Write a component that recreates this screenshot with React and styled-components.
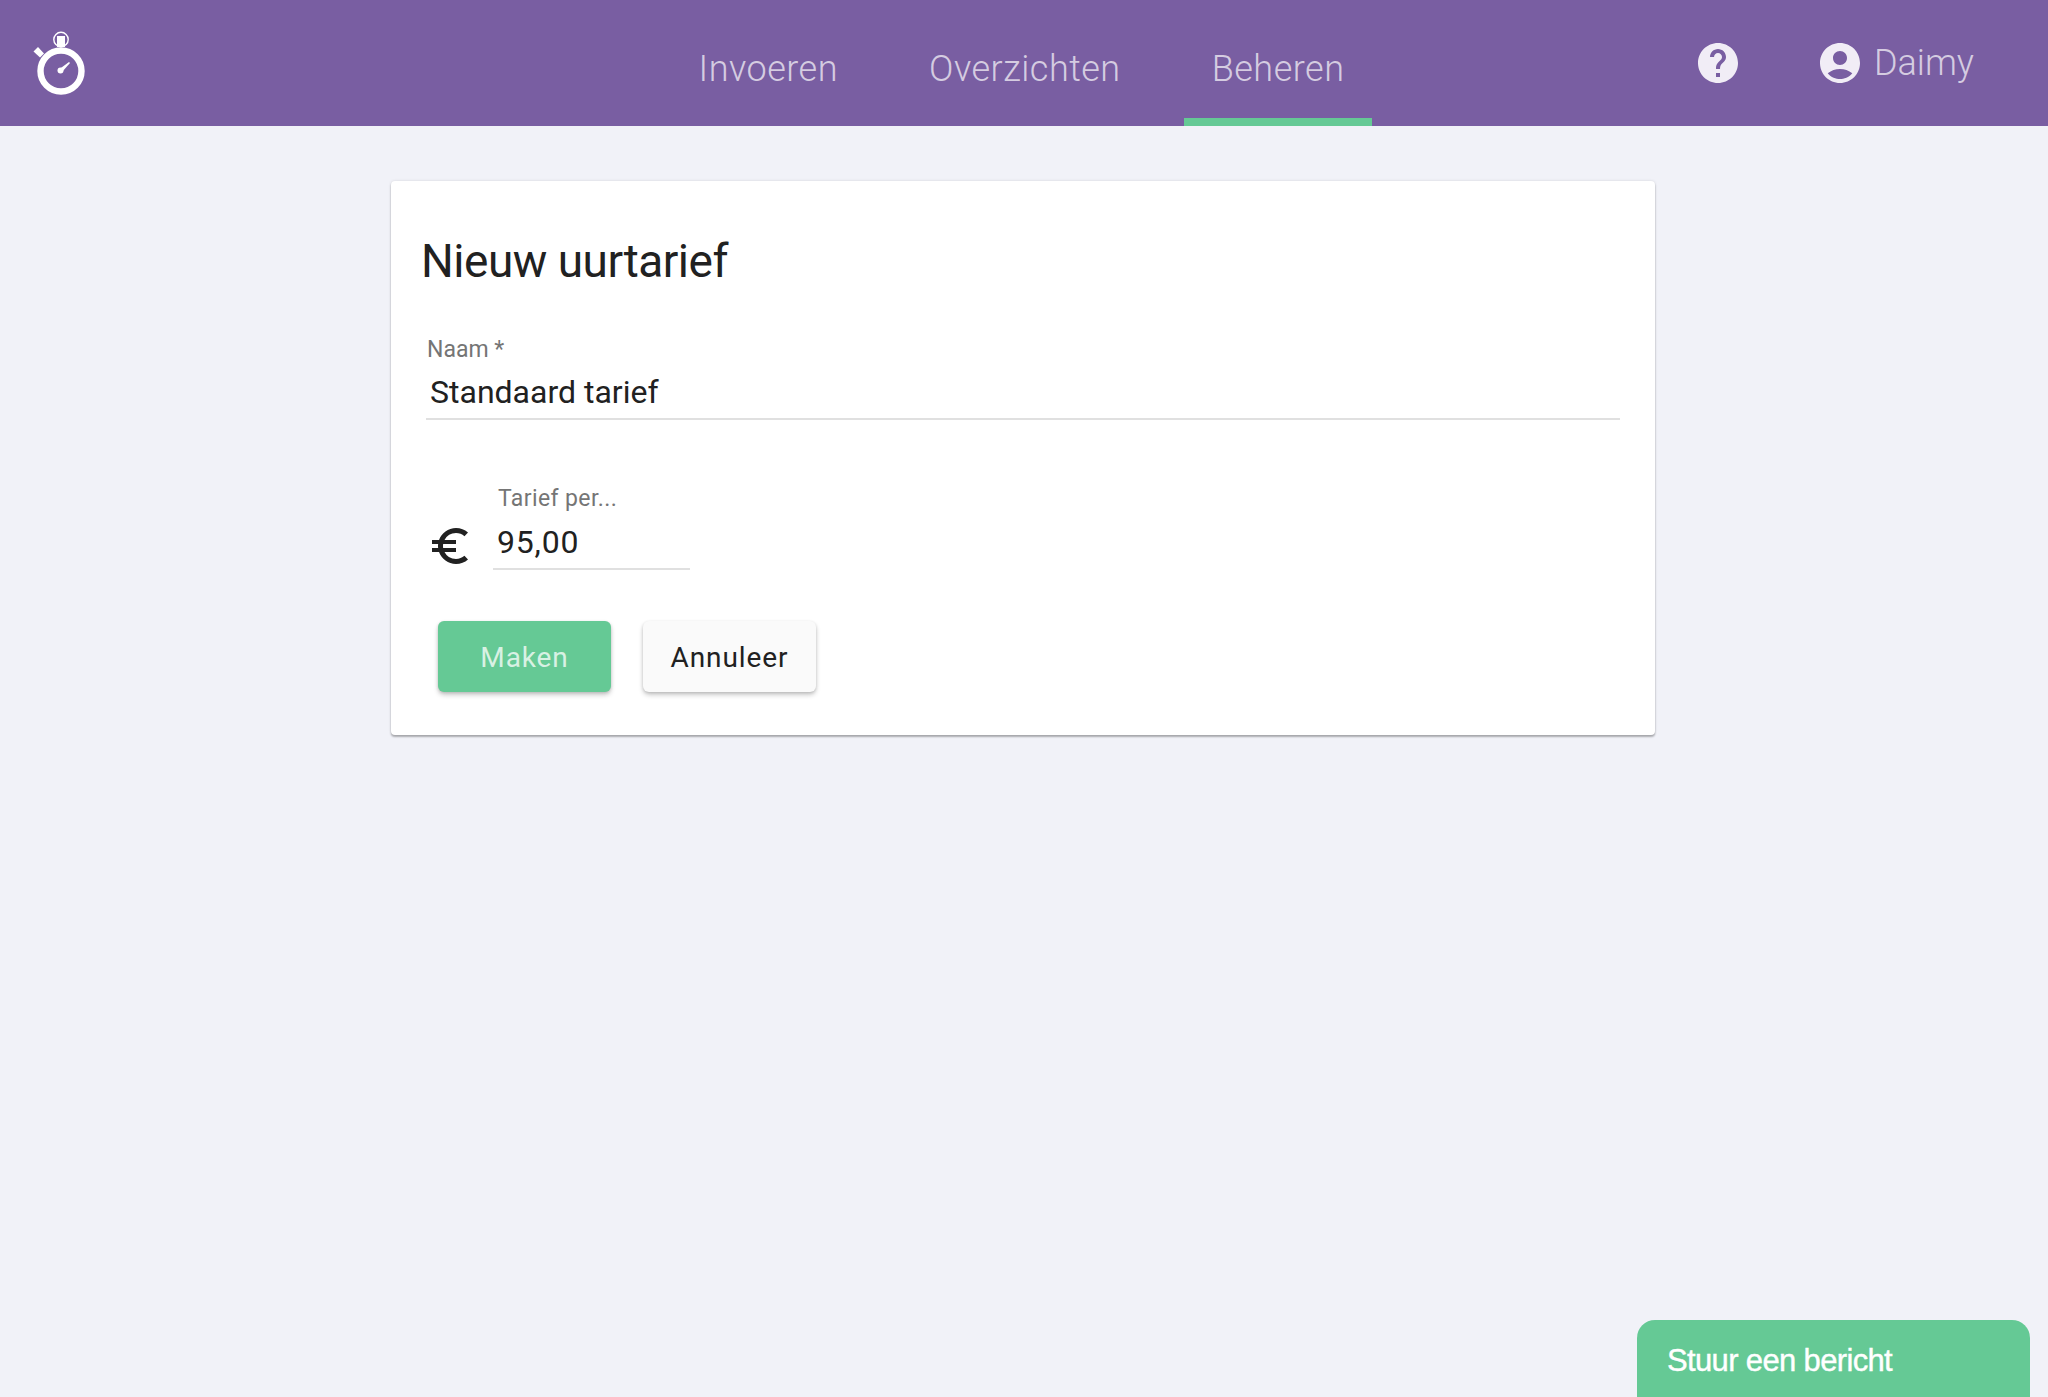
import React from 'react'
import styled, { createGlobalStyle } from 'styled-components'
import { MdHelp, MdAccountCircle, MdEuroSymbol } from 'react-icons/md'

const GlobalStyle = createGlobalStyle`
    html, body {
        margin: 0;
        padding: 0;
        height: 100%;
        background: #f1f2f8;
        font-family: Roboto, "Liberation Sans", sans-serif;
        overflow: hidden;
    }
`

const Header = styled.header`
    display: grid;
    grid-template-columns: 1fr auto 1fr;
    height: 126px;
    background: #795ea2;
    box-sizing: border-box;
`

const LogoWrap = styled.div`
    padding: 28px 0 0 30px;
`

const Nav = styled.nav`
    display: flex;
    gap: 35px;
    margin-right: 5px;
`

const Tab = styled.a`
    display: block;
    height: 126px;
    box-sizing: border-box;
    padding: 48px 28px 0;
    font-size: 36px;
    line-height: 42px;
    font-weight: 300;
    letter-spacing: 0.5px;
    color: rgba(255, 255, 255, 0.7);
    border-bottom: 8px solid ${props => (props.$active ? '#65c995' : 'transparent')};
`

const Actions = styled.div`
    display: flex;
    justify-content: flex-end;
    align-items: flex-start;
    padding: 39px 74px 0 0;
    color: #f1edf6;
`

const HelpButton = styled.span`
    display: block;
    width: 48px;
    height: 48px;
    margin-right: 74px;
`

const UserIcon = styled.span`
    display: block;
    width: 48px;
    height: 48px;
    margin-right: 10px;
`

const UserName = styled.span`
    margin-top: 3px;
    font-size: 36px;
    line-height: 42px;
    font-weight: 300;
    color: rgba(255, 255, 255, 0.7);
`

const Main = styled.main`
    width: 1264px;
    margin: 55px 0 0 391px;
`

const Card = styled.section`
    background: #fff;
    border-radius: 4px;
    box-shadow: 0 2px 2px rgba(0, 0, 0, 0.28), 0 0 3px rgba(0, 0, 0, 0.12);
    padding: 53px 35px 43px;
`

const Title = styled.h1`
    margin: 0 0 48px -5px;
    font-size: 46px;
    line-height: 54px;
    font-weight: 400;
    letter-spacing: -0.5px;
    color: #212121;
`

const Field = styled.label`
    display: block;
    width: ${props => props.$width || '100%'};
`

const FieldLabel = styled.span`
    display: block;
    margin-left: ${props => props.$indent || '1px'};
    font-size: 23px;
    line-height: 28px;
    letter-spacing: ${props => props.$spacing || '0'};
    color: #757575;
`

const TextInput = styled.input`
    display: block;
    width: 100%;
    box-sizing: border-box;
    margin-top: ${props => props.$gap || '9px'};
    padding: 0 0 7px 4px;
    border: none;
    border-bottom: 2px solid #e0e0e0;
    outline: none;
    background: transparent;
    font-family: inherit;
    font-size: 32px;
    line-height: 38px;
    height: 47px;
    letter-spacing: ${props => props.$spacing || '0'};
    color: #212121;
`

const RateRow = styled.div`
    display: flex;
    align-items: flex-end;
    gap: 19px;
    margin-top: 65px;
    color: #212121;
`

const EuroIcon = styled.span`
    display: block;
    width: 48px;
    height: 48px;
`

const Buttons = styled.div`
    display: flex;
    gap: 32px;
    margin: 51px 0 0 12px;
`

const Button = styled.button`
    width: 173px;
    height: 71px;
    padding: 2px 0 0;
    border: none;
    border-radius: 6px;
    background: ${props => (props.$primary ? '#65c995' : '#fafafa')};
    color: ${props => (props.$primary ? 'rgba(255, 255, 255, 0.75)' : '#212121')};
    font-family: inherit;
    font-size: 28px;
    font-weight: 400;
    letter-spacing: 0.9px;
    box-shadow: 0 3px 5px rgba(0, 0, 0, 0.2), 0 1px 3px rgba(0, 0, 0, 0.12);
`

const ChatButton = styled.button`
    position: fixed;
    right: 18px;
    bottom: 0;
    width: 393px;
    height: 77px;
    box-sizing: border-box;
    padding: 4px 0 0 30px;
    border: none;
    border-radius: 18px 18px 0 0;
    background: #65c995;
    color: #fff;
    text-align: left;
    font-family: "Liberation Sans", Arial, sans-serif;
    font-size: 31px;
    font-weight: 400;
    letter-spacing: -0.65px;
    -webkit-text-stroke: 0.4px #fff;
`

const Stopwatch = () => (
    <svg width="60" height="70" viewBox="30 28 60 70" style={{ display: 'block' }}>
        <circle cx="61" cy="71" r="20.5" fill="none" stroke="#fff" strokeWidth="6.4" />
        <circle cx="61" cy="39.5" r="7.2" fill="none" stroke="#fff" strokeWidth="1.4" />
        <path d="M57 36h8v11h-8z" fill="#fff" />
        <path d="M33.5 51.5l4.5-4.5 6 6.5-4 4z" fill="#fff" />
        <circle cx="60.5" cy="70.5" r="3" fill="#fff" />
        <path d="M59.5 69l9.5-7 1 1-8 9z" fill="#fff" />
    </svg>
)

const App = () => {
    return (
        <>
            <GlobalStyle />
            <Header>
                <LogoWrap>
                    <Stopwatch />
                </LogoWrap>
                <Nav>
                    <Tab>Invoeren</Tab>
                    <Tab>Overzichten</Tab>
                    <Tab $active>Beheren</Tab>
                </Nav>
                <Actions>
                    <HelpButton><MdHelp size={48} /></HelpButton>
                    <UserIcon><MdAccountCircle size={48} /></UserIcon>
                    <UserName>Daimy</UserName>
                </Actions>
            </Header>
            <Main>
                <Card>
                    <Title>Nieuw uurtarief</Title>
                    <Field>
                        <FieldLabel>Naam *</FieldLabel>
                        <TextInput defaultValue="Standaard tarief" />
                    </Field>
                    <RateRow>
                        <EuroIcon><MdEuroSymbol size={48} /></EuroIcon>
                        <Field $width="197px">
                            <FieldLabel $indent="5px" $spacing="0.4px">Tarief per...</FieldLabel>
                            <TextInput $gap="10px" $spacing="0.8px" defaultValue="95,00" />
                        </Field>
                    </RateRow>
                    <Buttons>
                        <Button $primary>Maken</Button>
                        <Button>Annuleer</Button>
                    </Buttons>
                </Card>
            </Main>
            <ChatButton>Stuur een bericht</ChatButton>
        </>
    )
}

export default App
